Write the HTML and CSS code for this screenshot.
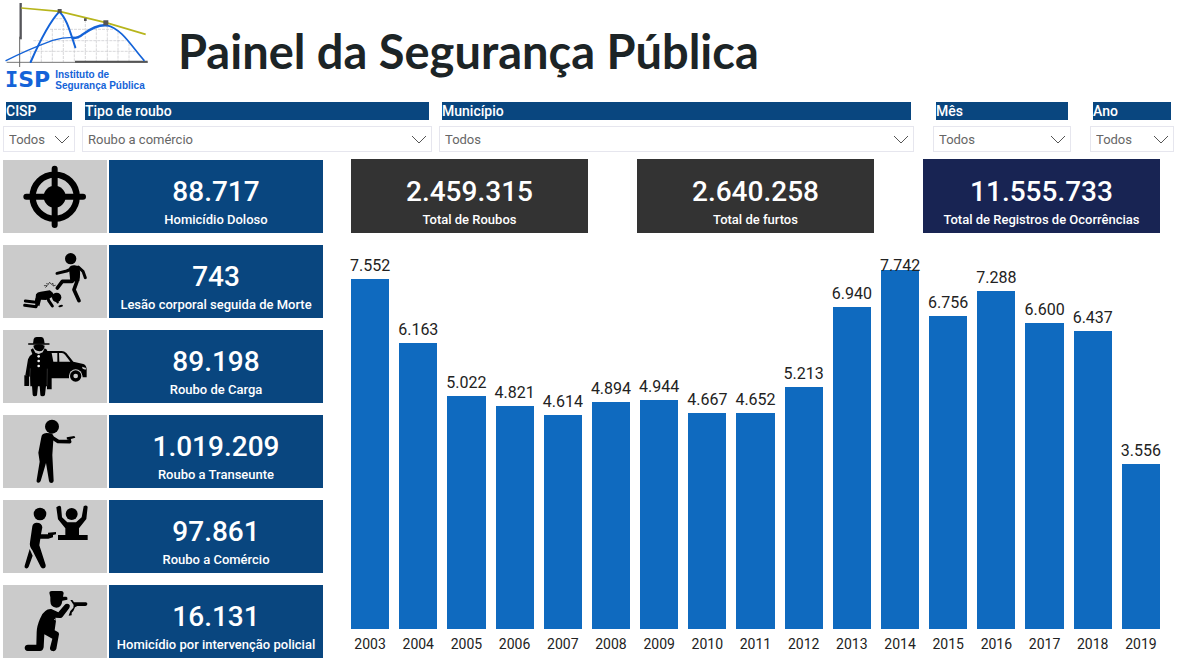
FILE: index.html
```html
<!DOCTYPE html>
<html lang="pt-BR">
<head>
<meta charset="utf-8">
<meta name="viewport" content="width=device-width, initial-scale=1">
<title>Painel da Segurança Pública</title>
<link rel="stylesheet" href="styles.css">
</head>
<body>
<header class="header">
  <div class="logo">
    <svg class="logo-graph" viewBox="9 6 438 198" aria-hidden="true">
      <g stroke="#c4c4c8" stroke-width="2" fill="none" stroke-dasharray="9 3">
        <path d="M92 155V186M124 130V186M157 88V186M190 60V186M223 115V186M256 60V186M289 85V186M322 76V186M354 95V186M387 130V186"/>
        <path d="M62 154H405M100 122H378M150 88H340M166 56H192"/>
      </g>
      <path d="M20 187H443" stroke="#777" stroke-width="3"/>
      <path d="M225 185H443" stroke="#555" stroke-width="6"/>
      <path d="M62 9V118" stroke="#55555a" stroke-width="7"/>
      <path d="M59 110V201" stroke="#666" stroke-width="3"/>
      <path d="M64 24L178 34L318 68L437 103" stroke="#b7b51c" stroke-width="5" fill="none"/>
      <g fill="none" stroke="#1463d8" stroke-linecap="round">
        <path d="M18 182C70 155 115 137 158 121Q195 110 235 113" stroke-width="4"/>
        <path d="M92 186C110 145 145 70 178 35" stroke-width="6"/>
        <path d="M178 35C200 55 210 95 226 142" stroke-width="6"/>
        <path d="M218 114Q236 114 248 103Q290 73 320 76" stroke-width="7"/>
        <path d="M320 76C365 85 395 140 432 181" stroke-width="5"/>
      </g>
      <path d="M173 27h12v12h-12zM310 61h15v15h-15zM252 55h8v8h-8z" fill="#555"/>
    </svg>
    <div class="logo-text">
      <span class="logo-mark"><span class="logo-serif">I</span>SP</span>
      <span class="logo-name">Instituto de<br>Segurança Pública</span>
    </div>
  </div>
  <h1 class="title">Painel da Segurança Pública</h1>
</header>

<form class="filters">
  <div class="filter">
    <label class="filter-label" for="cisp">CISP</label>
    <div class="filter-box"><select id="cisp"><option>Todos</option></select><svg viewBox="0 0 16 9"><path d="M1 1l7 7 7-7"/></svg></div>
  </div>
  <div class="filter">
    <label class="filter-label" for="tipo">Tipo de roubo</label>
    <div class="filter-box"><select id="tipo"><option>Roubo a comércio</option></select><svg viewBox="0 0 16 9"><path d="M1 1l7 7 7-7"/></svg></div>
  </div>
  <div class="filter">
    <label class="filter-label" for="municipio">Município</label>
    <div class="filter-box"><select id="municipio"><option>Todos</option></select><svg viewBox="0 0 16 9"><path d="M1 1l7 7 7-7"/></svg></div>
  </div>
  <div class="filter filter-date">
    <label class="filter-label" for="mes">Mês</label>
    <div class="filter-box"><select id="mes"><option>Todos</option></select><svg viewBox="0 0 16 9"><path d="M1 1l7 7 7-7"/></svg></div>
  </div>
  <div class="filter filter-date">
    <label class="filter-label" for="ano">Ano</label>
    <div class="filter-box"><select id="ano"><option>Todos</option></select><svg viewBox="0 0 16 9"><path d="M1 1l7 7 7-7"/></svg></div>
  </div>
</form>

<main class="main">
  <section class="crimes">
    <div class="crime">
      <div class="crime-icon">
        <svg viewBox="9 15 312 219" aria-hidden="true">
          <circle cx="164" cy="125" r="66" fill="none" stroke="#000" stroke-width="19"/>
          <circle cx="164" cy="125" r="33"/>
          <path d="M164 41V210M79 125H249" stroke="#000" stroke-width="18" stroke-linecap="round"/>
        </svg>
      </div>
      <div class="card"><strong class="value">88.717</strong><span class="caption">Homicídio Doloso</span></div>
    </div>
    <div class="crime">
      <div class="crime-icon">
        <svg viewBox="-21 9 312 219" aria-hidden="true">
          <circle cx="182" cy="50" r="17"/>
          <path d="M177 79Q180 69 194 70L207 73Q213 92 208 118L181 119Z"/>
          <g fill="none" stroke="#000" stroke-linecap="round" stroke-linejoin="round">
            <path d="M184 81L170 87L141 94" stroke-width="9"/>
            <path d="M205 75L219 88L226 107" stroke-width="9"/>
            <path d="M187 118L157 118L142 138" stroke-width="11"/>
            <path d="M201 118L192 143L207 176" stroke-width="11"/>
            <path d="M111 158L116 176L127 192" stroke-width="9"/>
            <path d="M125 154L143 181" stroke-width="7"/>
            <path d="M81 171L78 181L46 177" stroke-width="9"/>
            <path d="M81 186L78 194L44 190" stroke-width="9"/>
            <path d="M107 136L112 131L103 131M110 125L115 127M116 125L119 121L124 127L129 124L129 132L136 130" stroke-width="2"/>
          </g>
          <path d="M75 184L78 157Q82 150 92 149L119 145Q130 149 127 165L108 174L93 173L88 193Z"/>
          <circle cx="140" cy="166" r="14"/>
          <ellipse cx="152" cy="192" rx="7" ry="3" transform="rotate(-15 152 192)"/>
        </svg>
      </div>
      <div class="card"><strong class="value">743</strong><span class="caption">Lesão corporal seguida de Morte</span></div>
    </div>
    <div class="crime">
      <div class="crime-icon">
        <svg viewBox="-21 9 312 219" aria-hidden="true">
          <path d="M106 72H155Q163 72 169 78L190 104L220 111Q230 115 230 128V151H218A19 19 0 0 0 177 154H108Z"/>
          <path d="M125 78H142V104H130ZM147 78H156Q161 78 165 83L181 104H148Z" fill="#cbcbcb"/>
          <path d="M216 119L228 123L227 128L218 125Z" fill="#cbcbcb"/>
          <circle cx="197" cy="147" r="20" fill="#cbcbcb"/>
          <circle cx="197" cy="147" r="17"/><circle cx="197" cy="147" r="7" fill="#cbcbcb"/>
          <path d="M69 50L71 36Q73 30 80 30H94Q101 31 102 38L104 50Z"/>
          <path d="M56 51H117" stroke="#000" stroke-width="4" stroke-linecap="round"/>
          <path d="M70 56Q86 48 104 56Q103 72 88 73Q72 71 70 56Z"/>
          <path d="M62 68L69 64L76 77L86 81L98 76L104 64L112 69L108 80Q117 87 119 98L126 143Q125 147 115 149L113 178H61L60 149L46 145L54 97Q57 86 67 81Z"/>
          <path d="M66 176H84L81 205Q80 208 74 208Q69 208 68 203ZM89 176H108L105 203Q104 208 97 208Q91 208 91 203Z"/>
          <path d="M43 145H57V177H43ZM111 149H125V187H111Z"/>
          <path d="M61 124L58 176M112 125L111 176" stroke="#888" stroke-width="1"/>
          <g fill="#eee"><circle cx="86" cy="88" r="4"/><circle cx="86" cy="102" r="4"/><circle cx="86" cy="117" r="4"/></g>
          <path d="M78 75L86 80L97 75" stroke="#aaa" fill="none" stroke-width="1"/>
        </svg>
      </div>
      <div class="card"><strong class="value">89.198</strong><span class="caption">Roubo de Carga</span></div>
    </div>
    <div class="crime">
      <div class="crime-icon">
        <svg viewBox="6 282 312 219" aria-hidden="true">
          <circle cx="153" cy="317" r="21"/>
          <path d="M121 349Q122 337 136 336L150 337Q161 342 157 357L154 402L158 480Q157 486 151 486Q145 486 144 480L135 426L119 480Q116 487 110 485Q105 482 107 477L116 422L112 395Z"/>
          <path d="M146 345L171 361L206 362" fill="none" stroke="#000" stroke-width="11" stroke-linecap="round" stroke-linejoin="round"/>
          <path d="M197 349L220 345L223 350L210 354L209 363L200 362L202 355L198 356Z"/>
        </svg>
      </div>
      <div class="card"><strong class="value">1.019.209</strong><span class="caption">Roubo a Transeunte</span></div>
    </div>
    <div class="crime">
      <div class="crime-icon">
        <svg viewBox="-24 9 312 219" aria-hidden="true">
          <circle cx="87" cy="51" r="19"/>
          <path d="M64 88Q66 77 77 77Q93 77 94 91L90 112H111V107L135 105V112L126 114V121L112 125H88L85 145L104 204Q105 213 98 214Q92 215 89 209L64 160Q54 149 57 136Z"/>
          <path d="M56 156L65 176L53 209Q50 216 44 214Q39 211 41 206Z"/>
          <circle cx="182" cy="51" r="18"/>
          <path d="M141 114H230V129H141Z"/>
          <path d="M141 28Q145 24 150 29L153 61L169 76H195L212 61L218 28Q225 22 230 29L226 66L204 94V116H163V94L141 67L136 31Z"/>
        </svg>
      </div>
      <div class="card"><strong class="value">97.861</strong><span class="caption">Roubo a Comércio</span></div>
    </div>
    <div class="crime">
      <div class="crime-icon">
        <svg viewBox="-21 0 312 219" aria-hidden="true">
          <path d="M118 23Q118 18 125 18H154Q160 18 161 24L159 35H169Q174 37 172 44L157 47Q155 67 139 68Q121 66 121 48V37Z"/>
          <path d="M106 78Q113 71 124 72L145 82L163 61Q169 54 177 58Q182 62 178 69L158 95Q155 100 149 99L136 98L138 107L134 136L145 142Q149 147 146 153L139 192Q136 200 128 198Q119 196 120 188L127 161L103 148L101 187Q99 198 90 198H53Q44 197 44 188Q45 179 54 179H79L80 142Q80 124 90 101Q95 86 106 78Z"/>
          <path d="M181 45L187 45L192 52H228Q233 53 232 58Q231 63 226 63H202L195 67L190 78L185 83L185 91L176 92L181 78L190 68L191 60Z"/>
          <path d="M132 103L145 108" stroke="#cbcbcb" stroke-width="2"/>
        </svg>
      </div>
      <div class="card"><strong class="value">16.131</strong><span class="caption">Homicídio por intervenção policial</span></div>
    </div>
  </section>

  <section class="overview">
    <div class="totals">
      <div class="card card-dark"><strong class="value">2.459.315</strong><span class="caption">Total de Roubos</span></div>
      <div class="card card-dark"><strong class="value">2.640.258</strong><span class="caption">Total de furtos</span></div>
      <div class="card card-navy"><strong class="value">11.555.733</strong><span class="caption">Total de Registros de Ocorrências</span></div>
    </div>
    <div class="plot">
      <div class="column"><span class="amount">7.552</span><div class="bar" style="height:93.8%"></div></div>
      <div class="column"><span class="amount">6.163</span><div class="bar" style="height:76.6%"></div></div>
      <div class="column"><span class="amount">5.022</span><div class="bar" style="height:62.4%"></div></div>
      <div class="column"><span class="amount">4.821</span><div class="bar" style="height:59.9%"></div></div>
      <div class="column"><span class="amount">4.614</span><div class="bar" style="height:57.3%"></div></div>
      <div class="column"><span class="amount">4.894</span><div class="bar" style="height:60.8%"></div></div>
      <div class="column"><span class="amount">4.944</span><div class="bar" style="height:61.4%"></div></div>
      <div class="column"><span class="amount">4.667</span><div class="bar" style="height:58%"></div></div>
      <div class="column"><span class="amount">4.652</span><div class="bar" style="height:57.8%"></div></div>
      <div class="column"><span class="amount">5.213</span><div class="bar" style="height:64.8%"></div></div>
      <div class="column"><span class="amount">6.940</span><div class="bar" style="height:86.2%"></div></div>
      <div class="column column-peak"><span class="amount">7.742</span><div class="bar" style="height:96.2%"></div></div>
      <div class="column"><span class="amount">6.756</span><div class="bar" style="height:83.9%"></div></div>
      <div class="column"><span class="amount">7.288</span><div class="bar" style="height:90.5%"></div></div>
      <div class="column"><span class="amount">6.600</span><div class="bar" style="height:82%"></div></div>
      <div class="column"><span class="amount">6.437</span><div class="bar" style="height:80%"></div></div>
      <div class="column"><span class="amount">3.556</span><div class="bar" style="height:44.2%"></div></div>
    </div>
    <div class="axis">
      <span>2003</span><span>2004</span><span>2005</span><span>2006</span><span>2007</span><span>2008</span><span>2009</span><span>2010</span><span>2011</span><span>2012</span><span>2013</span><span>2014</span><span>2015</span><span>2016</span><span>2017</span><span>2018</span><span>2019</span>
    </div>
  </section>
</main>
</body>
</html>
```
FILE: styles.css
```css
* {
  box-sizing: border-box;
}

body {
  margin: 0;
  background: #fff;
  color: #222;
  font-family: Roboto, "Liberation Sans", sans-serif;
}

.header {
  display: flex;
  align-items: flex-start;
  gap: 29px;
  padding: 2px 3px 0;
  min-height: 102px;
}

.logo {
  width: 146px;
}

.logo-graph {
  display: block;
  width: 100%;
}

.logo-text {
  display: flex;
  align-items: center;
  gap: 5px;
  padding-left: 2px;
  color: #1463d8;
  white-space: nowrap;
}

.logo-mark {
  font: bold 22px/24px "DejaVu Sans", sans-serif;
}

.logo-serif {
  font-family: "DejaVu Sans Mono", monospace;
}

.logo-name {
  font: bold 10px/11px "Liberation Sans", sans-serif;
}

.title {
  margin: 0;
  padding-top: 20px;
  color: #1c2426;
  font: bold 47px/58px Lato, sans-serif;
  white-space: nowrap;
}

.filters {
  display: grid;
  grid-template-columns: 72px minmax(0, 350fr) minmax(0, 475fr) 150px 96px;
  gap: 7px;
  padding: 0 3px;
}

.filter-date {
  padding-left: 12px;
}

.filter-label {
  display: block;
  margin: 0 3px 6px;
  background: #09467f;
  color: #fff;
  font-size: 14px;
  font-weight: 500;
  line-height: 18px;
}

.filter-box {
  display: grid;
  align-items: center;
  border: 1px solid #e6e6ee;
}

.filter-box select,
.filter-box svg {
  grid-area: 1 / 1;
}

.filter-box select {
  appearance: none;
  width: 100%;
  height: 24px;
  padding: 0 24px 0 5px;
  border: 0;
  background: transparent;
  color: #666;
  font: 13px Roboto, sans-serif;
}

.filter-box svg {
  justify-self: end;
  width: 16px;
  margin-right: 4px;
  fill: none;
  stroke: #555;
  pointer-events: none;
}

.main {
  display: grid;
  grid-template-columns: 320px minmax(0, 1fr);
  gap: 28px;
  padding: 7px 17px 1px 3px;
}

.crimes {
  display: grid;
  gap: 12px;
  padding: 1px 0;
}

.crime {
  display: grid;
  grid-template-columns: 104px minmax(0, 1fr);
  gap: 2px;
}

.crime-icon {
  background: #cbcbcb;
}

.crime-icon svg {
  display: block;
  width: 100%;
}

.card {
  display: flex;
  flex-direction: column;
  align-items: center;
  padding-top: 16px;
  background: #09467f;
  color: #fff;
  white-space: nowrap;
}

.card-dark {
  background: #333;
}

.card-navy {
  background: #182453;
}

.value {
  font-size: 28px;
  font-weight: 500;
  line-height: 32px;
}

.caption {
  font-size: 13px;
  font-weight: 500;
  line-height: 23px;
}

.overview {
  display: flex;
  flex-direction: column;
}

.totals {
  display: grid;
  grid-template-columns: repeat(3, minmax(0, 1fr));
  gap: 49px;
  margin-bottom: 23px;
}

.totals .card {
  padding: 17px 0 2px;
}

.plot {
  display: grid;
  flex: 1;
  grid-template-columns: repeat(17, minmax(0, 1fr));
  gap: 10px;
}

.column {
  display: flex;
  flex-direction: column;
  align-items: center;
  justify-content: flex-end;
}

.amount {
  margin-bottom: 3px;
  font-size: 16px;
  line-height: 20px;
}

.column-peak .amount {
  z-index: 1;
  margin-bottom: -6px;
}

.bar {
  flex-shrink: 0;
  width: 100%;
  background: #0f6abf;
}

.axis {
  display: grid;
  grid-template-columns: repeat(17, minmax(0, 1fr));
  gap: 10px;
  font-size: 14px;
  line-height: 30px;
  text-align: center;
}
```
